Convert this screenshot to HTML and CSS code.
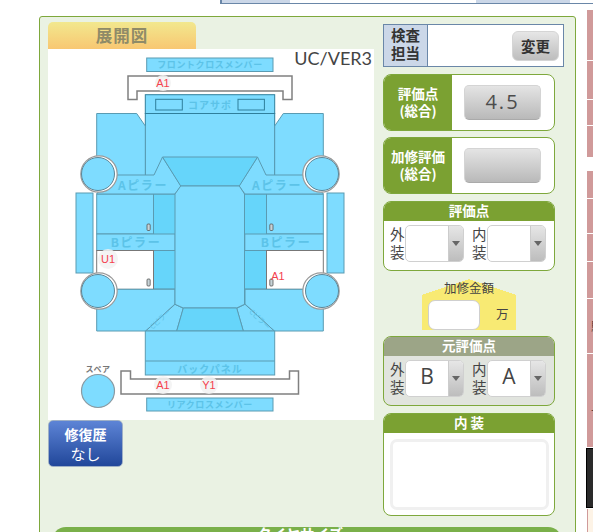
FILE: index.html
```html
<!DOCTYPE html>
<html lang="ja">
<head>
<meta charset="utf-8">
<title>展開図</title>
<link rel="stylesheet" href="styles.css">
</head>
<body>
<div class="topbar">
  <div class="cell shade w68"></div>
  <div class="cell w186"></div>
  <div class="cell shade w94"></div>
  <div class="cell fill"></div>
</div>
<div class="page">
  <main class="panel">
    <div class="columns">
      <section class="left">
        <div class="tab">展開図</div>
        <svg class="diagram" viewBox="48 49 326 371" width="326" height="371" xmlns="http://www.w3.org/2000/svg">
          <defs>
            <g id="half">
              <path class="p" d="M96.7 113.5H136.7L145.3 126V176H96.7Z"/>
              <rect class="p" x="76" y="193" width="17" height="80"/>
              <rect class="p" x="96.7" y="194" width="57" height="40"/>
              <rect class="d" x="153.5" y="194" width="22" height="95"/>
              <rect class="p" x="96.7" y="234" width="78.5" height="16.5"/>
              <rect class="open" x="96.7" y="250.5" width="56.8" height="38.8"/>
              <path class="p" d="M96.7 289.3H175V304L145.7 331H96.7Z"/>
              <path class="p" d="M112 175H154L162.5 157L181 186L175 194H96.7L112 175Z"/>
              <path class="p" d="M175 304.3L183.3 308.3L176.7 331H145.7Z"/>
              <rect class="mark" x="147" y="224" width="3.2" height="6.5" rx="1"/>
              <rect class="mark" x="147" y="279" width="3.2" height="7" rx="1"/>
              <circle class="ring" cx="99" cy="174" r="18.2"/>
              <circle class="wheel" cx="98" cy="174" r="16.5"/>
              <circle class="ring" cx="99" cy="291" r="18.2"/>
              <circle class="wheel" cx="98" cy="291" r="16.5"/>
            </g>
          </defs>
          <rect class="p" x="146.7" y="58" width="126.3" height="13.5"/>
          <path class="bumper" d="M128 76H292V99.5H283V91H137V99.5H128Z"/>
          <rect class="p strong" x="145.3" y="113.5" width="129.4" height="62"/>
          <rect class="p strong" x="145.3" y="94.7" width="129.4" height="18.8"/>
          <rect class="p strong" x="155.7" y="99.3" width="26.6" height="10.7"/>
          <rect class="p strong" x="238" y="99.3" width="26.4" height="10.7"/>
          <use href="#half"/>
          <use href="#half" transform="matrix(-1 0 0 1 420 0)"/>
          <path class="d" d="M162.5 157H257.5L239.3 186H180.7Z"/>
          <path class="p" d="M180.7 186H239.3L244.5 194V304.3L236.7 308H183.3L175 304.3V194Z"/>
          <path class="d" d="M183.3 308H236.7L243.3 331H176.7Z"/>
          <rect class="p" x="145.3" y="331" width="129.4" height="44"/>
          <line class="seam" x1="145.3" y1="361" x2="274.7" y2="361"/>
          <path class="bumper" d="M121 371H130.5V379H289.5V371H298.5V394H121Z"/>
          <rect class="p" x="146.7" y="398" width="126.3" height="13"/>
          <circle class="spare" cx="98" cy="391" r="16.5"/>

          <text class="part small" x="210" y="68">フロントクロスメンバー</text>
          <text class="part" x="210" y="109">コアサポ</text>
          <text class="part big" x="143" y="190">Aピラー</text>
          <text class="part big" x="277" y="190">Aピラー</text>
          <text class="part big" x="136" y="247">Bピラー</text>
          <text class="part big" x="286" y="247">Bピラー</text>
          <text class="part tiny" transform="translate(162 321) rotate(-44)" x="0" y="0">Cピラー</text>
          <text class="part tiny" transform="translate(258 321) rotate(44)" x="0" y="0">Cピラー</text>
          <text class="part" x="210" y="373">バックパネル</text>
          <text class="part small" x="210" y="408">リアクロスメンバー</text>
          <text class="spare-label" x="98" y="372">スペア</text>

          <circle class="halo" cx="163" cy="83" r="8"/>
          <circle class="halo" cx="163" cy="385" r="9"/>
          <circle class="halo" cx="209" cy="385" r="9"/>
          <circle class="halo" cx="108" cy="259" r="10"/>
          <text class="code" x="163" y="87">A1</text>
          <text class="code" x="163" y="389">A1</text>
          <text class="code" x="209" y="389">Y1</text>
          <text class="code" x="108" y="263">U1</text>
          <text class="code" x="278" y="280">A1</text>
          <text class="version" x="372" y="65">UC/VER3</text>
        </svg>
        <button class="history" type="button"><b>修復歴</b><span>なし</span></button>
      </section>

      <aside class="right">
        <div class="inspector">
          <div class="inspector-label">検査<br>担当</div>
          <div class="inspector-body"><button class="change" type="button">変更</button></div>
        </div>

        <div class="score">
          <div class="score-label">評価点<br>(総合)</div>
          <div class="score-body"><div class="score-value">4.5</div></div>
        </div>
        <div class="score">
          <div class="score-label">加修評価<br>(総合)</div>
          <div class="score-body"><div class="score-value"></div></div>
        </div>

        <div class="card">
          <h3 class="card-head">評価点</h3>
          <div class="pair">
            <span class="pair-label">外装</span>
            <div class="sel"><span class="sel-val"></span><span class="sel-arrow"></span></div>
            <span class="pair-label">内装</span>
            <div class="sel"><span class="sel-val"></span><span class="sel-arrow"></span></div>
          </div>
        </div>

        <div class="repair">
          <div class="repair-label">加修金額</div>
          <div class="repair-row"><div class="repair-input"></div><span>万</span></div>
        </div>

        <div class="card muted">
          <h3 class="card-head">元評価点</h3>
          <div class="pair">
            <span class="pair-label">外装</span>
            <div class="sel"><span class="sel-val">B</span><span class="sel-arrow"></span></div>
            <span class="pair-label">内装</span>
            <div class="sel"><span class="sel-val">A</span><span class="sel-arrow"></span></div>
          </div>
        </div>

        <div class="card interior">
          <h3 class="card-head">内 装</h3>
          <div class="interior-body"><div class="interior-text"></div></div>
        </div>
      </aside>
    </div>
    <div class="tire">タイヤサイズ</div>
  </main>

  <nav class="side">
    <div class="seg"></div>
    <div class="seg"></div>
    <div class="seg"></div>
    <div class="seg"></div>
    <div class="seg blank"></div>
    <div class="seg"></div>
    <div class="seg"></div>
    <div class="seg"></div>
    <div class="seg"></div>
    <div class="seg glyph">駐</div>
    <div class="seg glyph low">-</div>
    <div class="seg dark"></div>
    <div class="seg cream"></div>
  </nav>
</div>
</body>
</html>
```
FILE: styles.css
```css
* { box-sizing: border-box; }
html, body { margin: 0; padding: 0; }
body {
  width: 593px;
  height: 532px;
  overflow: hidden;
  background: #fff;
  font-family: "Noto Sans CJK JP", "Noto Sans", sans-serif;
  color: #333;
}

.topbar {
  display: flex;
  height: 4px;
  margin-left: 220px;
  border-left: 2px solid #6a87a8;
  border-bottom: 1px solid #6a87a8;
}
.cell.shade { background: #cbd7e8; }
.w68 { width: 68px; }
.w186 { width: 186px; }
.w94 { width: 94px; }
.fill { flex: 1; }

.page { display: flex; align-items: flex-start; padding-top: 6px; }

.panel {
  flex: none;
  width: 537px;
  height: 560px;
  margin: 6px 0 0 39px;
  background: #eaf2e3;
  border: 1px solid #7ea83c;
  border-radius: 3px;
}
.columns { display: flex; align-items: flex-start; }

.left { width: 326px; margin: 5px 0 0 8px; }
.tab {
  width: 148px;
  height: 27px;
  border-radius: 5px 5px 0 0;
  background: linear-gradient(#f2e88e, #f8c772);
  color: #8f8b68;
  font-size: 16.5px;
  font-weight: 700;
  line-height: 27px;
  letter-spacing: 1px;
  text-align: center;
}
.diagram { display: block; background: #fff; }

.p { fill: #7edcff; stroke: #5a9bb2; stroke-width: 1; }
.p.strong { stroke: #2f7f9c; }
.d { fill: #66d5fa; stroke: #5a9bb2; stroke-width: 1; }
.open { fill: #fff; stroke: #777; stroke-width: 1; }
.seam { stroke: #5a9bb2; stroke-width: 1; }
.bumper { fill: #fff; stroke: #808080; stroke-width: 1.5; }
.ring { fill: #fff; stroke: #999; stroke-width: 1.2; }
.wheel { fill: #7edcff; stroke: #5d8697; stroke-width: 1; }
.spare { fill: #7edcff; stroke: #8a9aa2; stroke-width: 1.2; }
.mark { fill: #c8d4d8; stroke: #555; stroke-width: 0.8; }
.halo { fill: #f2f2f2; fill-opacity: 0.85; }

.part {
  fill: #5cc3e8;
  font-size: 10px;
  font-weight: 700;
  letter-spacing: 1px;
  text-anchor: middle;
}
.part.small { font-size: 9px; letter-spacing: 0.6px; }
.part.big { font-size: 12px; letter-spacing: 1.6px; }
.part.tiny { font-size: 7px; font-weight: 400; letter-spacing: 0; }
.spare-label { fill: #777; font-size: 8px; font-weight: 700; letter-spacing: 0.5px; text-anchor: middle; }
.code {
  fill: #f4414d;
  font-family: "Liberation Sans", sans-serif;
  font-size: 11px;
  text-anchor: middle;
}
.version {
  fill: #444;
  font-family: "Lato", sans-serif;
  font-size: 18px;
  text-anchor: end;
}

.history {
  display: flex;
  flex-direction: column;
  align-items: center;
  width: 75px;
  height: 47px;
  padding: 3px 0 0;
  border: 1px solid #9fb0c6;
  border-radius: 5px;
  background: linear-gradient(#5d84d6, #21479a);
  color: #fff;
  font-family: inherit;
  font-size: 14px;
  line-height: 20px;
}
.history span { font-size: 15px; }

.right {
  display: flex;
  flex-direction: column;
  width: 181px;
  margin: 7px 0 0 9px;
}

.inspector {
  display: flex;
  height: 43px;
  border: 1px solid #6a87a8;
  background: #fff;
}
.inspector-label {
  width: 44px;
  padding-top: 1px;
  border-right: 1px solid #6a87a8;
  background: #cbd7e8;
  font-size: 14.5px;
  font-weight: 700;
  line-height: 18px;
  text-align: center;
}
.inspector-body { flex: 1; display: flex; align-items: center; justify-content: flex-end; padding-right: 4px; }
.change {
  width: 47px;
  height: 30px;
  padding: 0;
  border: 1px solid #d5d5d5;
  border-radius: 6px;
  background: linear-gradient(#e6e6e6, #bdbdbd);
  color: #333;
  font-family: inherit;
  font-size: 14.5px;
  font-weight: 700;
}

.score {
  display: flex;
  width: 172px;
  height: 57px;
  margin-top: 7px;
  border: 1px solid #7ea83c;
  border-radius: 8px;
  background: #fff;
  overflow: hidden;
}
.score + .score { margin-top: 6px; }
.score-label {
  display: flex;
  align-items: center;
  justify-content: center;
  width: 68px;
  padding-bottom: 1px;
  background: #7ba132;
  color: #fff;
  font-size: 13.5px;
  font-weight: 700;
  line-height: 17px;
  text-align: center;
}
.score-body { flex: 1; padding: 10px 0 0 12px; }
.score-value {
  width: 77px;
  height: 35px;
  border: 1px solid #d4d4d4;
  border-bottom-color: #aaa;
  border-radius: 5px;
  background: linear-gradient(#e4e4e4, #b9b9b9);
  color: #4c4c4c;
  font-family: "Open Sans", sans-serif;
  font-size: 20px;
  letter-spacing: 2px;
  line-height: 32px;
  text-align: center;
}

.card {
  width: 172px;
  margin-top: 7px;
  border: 1px solid #7ea83c;
  border-radius: 8px;
  background: #fff;
  overflow: hidden;
}
.card-head {
  height: 19px;
  margin: 0;
  background: #7ba132;
  color: #fff;
  font-size: 13.5px;
  font-weight: 700;
  line-height: 16px;
  text-align: center;
}
.pair {
  display: flex;
  align-items: flex-start;
  height: 49px;
  padding: 4px 0 0 6px;
}
.pair-label {
  width: 15px;
  font-size: 14.5px;
  line-height: 18px;
  color: #444;
}
.sel {
  display: flex;
  width: 59px;
  height: 37px;
  margin-right: 8px;
  border: 1px solid #d0d0d0;
  border-radius: 5px;
  overflow: hidden;
  background: #fff;
}
.sel-val {
  flex: 1;
  font-family: "Open Sans", sans-serif;
  font-size: 21px;
  line-height: 31px;
  text-align: center;
  color: #444;
}
.sel-arrow {
  display: flex;
  align-items: center;
  justify-content: center;
  width: 15px;
  border-left: 1px solid #ccc;
  background: linear-gradient(#e6e6e6, #bdbdbd);
}
.sel-arrow::after {
  content: "";
  border-left: 4px solid transparent;
  border-right: 4px solid transparent;
  border-top: 5px solid #666;
}

.repair {
  width: 94px;
  height: 51px;
  margin: 8px 0 0 39px;
  background:
    linear-gradient(to top left, #f8ea73 50%, transparent 50%) 0 0 / 47px 16px no-repeat,
    linear-gradient(to top right, #f8ea73 50%, transparent 50%) 47px 0 / 47px 16px no-repeat,
    linear-gradient(#f8ea73, #f8ea73) 0 16px / 94px 35px no-repeat;
}
.repair-label {
  height: 21px;
  font-size: 12.5px;
  line-height: 18px;
  text-align: center;
  color: #444;
}
.repair-row { display: flex; padding-left: 6px; font-size: 12.5px; color: #444; }
.repair-input {
  width: 52px;
  height: 30px;
  margin-right: 16px;
  border: 1px solid #cfcfcf;
  border-radius: 7px;
  background: #fff;
}
.repair-row span { padding-top: 5px; line-height: 18px; }

.repair + .card { margin-top: 6px; height: 70px; }
.card.muted { background: #e1e4de; }
.card.muted .card-head { background: #9ca587; }

.card.interior { height: 103px; }
.interior-body { padding: 6px 5px 0 6px; }
.interior-text {
  height: 71px;
  border: 3px solid #f0f0f0;
  border-radius: 7px;
  background: #fff;
}

.tire {
  width: 510px;
  height: 40px;
  margin: 11px 0 0 12px;
  padding-right: 14px;
  border-radius: 14px 14px 0 0;
  background: #7ab04a;
  color: #fff;
  font-size: 14.5px;
  font-weight: 700;
  line-height: 14px;
  text-align: center;
}

.side {
  flex: none;
  display: grid;
  grid-template-rows: 50px 38px 25px 31px 12px 27px 34px 27px 36px 54px 93px 60px 40px;
  row-gap: 1px;
  width: 7px;
  height: 522px;
  margin-left: 10px;
  overflow: hidden;
}
.seg {
  margin-left: 1px;
  background: #d09a9a;
  color: #553c3c;
  font-size: 13px;
  line-height: 54px;
  white-space: nowrap;
}
.seg.glyph { padding-left: 4px; }
.seg.blank { background: transparent; }
.seg.low { line-height: 110px; }
.seg.dark { margin-left: 0; border: 1px solid #000; background: #2a2a2a; }
.seg.cream { background: #fdf3e6; border-left: 1px solid #d09a9a; }
```
